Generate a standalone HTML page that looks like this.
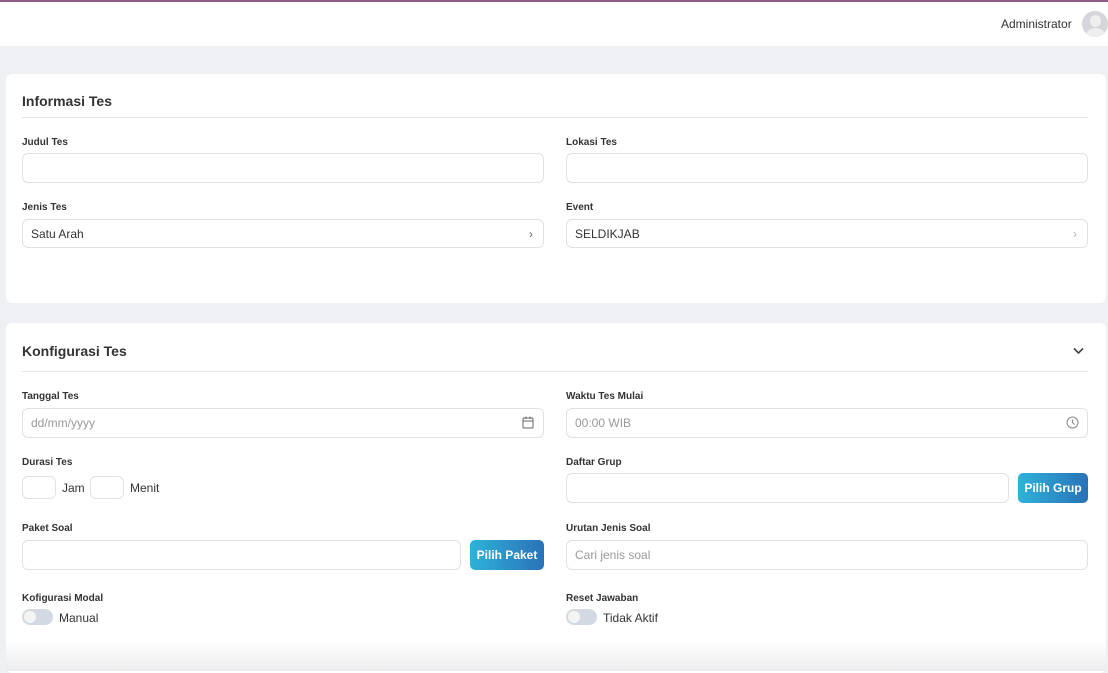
<!DOCTYPE html>
<html><head><style>
*{box-sizing:border-box;margin:0;padding:0}
body{width:1108px;height:671px;overflow:hidden;background:#eff0f3;font-family:"Liberation Sans",sans-serif;color:#333;position:relative}
.a{position:absolute}
.top{left:0;top:0;width:1108px;height:46px;background:#fff;border-top:2px solid #8a5c86}
.card{background:#fff;border-radius:6px;left:6px;width:1100px}
.t{font-size:14px;font-weight:bold;color:#333}
.hr{height:1px;background:#e4e5e8;left:22px;width:1066px}
.l{font-size:10px;font-weight:bold;color:#333}
.i{border:1px solid #dfe1e5;border-radius:6px;background:#fff;height:30px;font-size:12px;color:#333;padding-left:8px;line-height:28px}
.ph{color:#999}
.btn{background:linear-gradient(90deg,#2eb2d9,#2a72b8);color:#fff;font-size:12px;font-weight:bold;border-radius:5px;height:30px;line-height:30px;text-align:center}
.tg{width:31px;height:16px;border-radius:8px;background:#d3d9e2}
.tg:after{content:"";position:absolute;left:2px;top:2px;width:12px;height:12px;border-radius:50%;background:#f4f4f4}
.tx{font-size:12px;color:#333}
.ic{right:10px;top:7px;font-size:12px;color:#666}
</style></head><body>
<div class="a top"></div>
<div class="a tx" style="left:1001px;top:17px;font-size:12px">Administrator</div>
<div class="a" style="left:1082px;top:11px;width:26px;height:26px;border-radius:50%;background:#d4d6da;overflow:hidden"><div class="a" style="left:8px;top:4px;width:11px;height:12px;border-radius:50%;background:#eee"></div><div class="a" style="left:4px;top:17px;width:19px;height:14px;border-radius:50%;background:#eee"></div></div>

<div class="a card" style="top:74px;height:229px"></div>
<div class="a t" style="left:22px;top:93px">Informasi Tes</div>
<div class="a hr" style="top:117px"></div>
<div class="a l" style="left:22px;top:137px">Judul Tes</div>
<div class="a i" style="left:22px;top:153px;width:522px"></div>
<div class="a l" style="left:566px;top:137px">Lokasi Tes</div>
<div class="a i" style="left:566px;top:153px;width:522px"></div>
<div class="a l" style="left:22px;top:202px">Jenis Tes</div>
<div class="a i" style="left:22px;top:219px;width:522px;height:29px">Satu Arah<span class="a ic" style="top:0">&#8250;</span></div>
<div class="a l" style="left:566px;top:202px">Event</div>
<div class="a i" style="left:566px;top:219px;width:522px;height:29px">SELDIKJAB<span class="a ic" style="top:0;color:#aaa">&#8250;</span></div>

<div class="a card" style="top:323px;height:350px"></div>
<div class="a" style="left:6px;top:640px;width:1100px;height:31px;background:linear-gradient(#fff,#ececee)"></div>
<div class="a t" style="left:22px;top:343px">Konfigurasi Tes</div>
<svg class="a" style="left:1073px;top:347px" width="11" height="8"><path d="M1 1.5L5.5 6L10 1.5" stroke="#444" stroke-width="1.6" fill="none"/></svg>
<div class="a hr" style="top:371px"></div>
<div class="a l" style="left:22px;top:391px">Tanggal Tes</div>
<div class="a i ph" style="left:22px;top:408px;width:522px">dd/mm/yyyy
<svg class="a" style="right:9px;top:7px" width="12" height="13"><rect x="1" y="2" width="10" height="10" rx="1" stroke="#666" fill="none"/><path d="M1 5H11M4 0.5V3M8 0.5V3" stroke="#666"/></svg></div>
<div class="a l" style="left:566px;top:391px">Waktu Tes Mulai</div>
<div class="a i ph" style="left:566px;top:408px;width:522px">00:00 WIB
<svg class="a" style="right:8px;top:7px" width="13" height="13"><circle cx="6.5" cy="6.5" r="5.5" stroke="#888" fill="none"/><path d="M6.5 3.5V6.5L8.5 8.5" stroke="#888" fill="none"/></svg></div>
<div class="a l" style="left:22px;top:457px">Durasi Tes</div>
<div class="a i" style="left:22px;top:476px;width:34px;height:23px"></div>
<div class="a tx" style="left:62px;top:481px">Jam</div>
<div class="a i" style="left:90px;top:476px;width:34px;height:23px"></div>
<div class="a tx" style="left:130px;top:481px">Menit</div>
<div class="a l" style="left:566px;top:457px">Daftar Grup</div>
<div class="a i" style="left:566px;top:473px;width:443px"></div>
<div class="a btn" style="left:1018px;top:473px;width:70px">Pilih Grup</div>
<div class="a l" style="left:22px;top:523px">Paket Soal</div>
<div class="a i" style="left:22px;top:540px;width:439px"></div>
<div class="a btn" style="left:470px;top:540px;width:74px">Pilih Paket</div>
<div class="a l" style="left:566px;top:523px">Urutan Jenis Soal</div>
<div class="a i ph" style="left:566px;top:540px;width:522px">Cari jenis soal</div>
<div class="a l" style="left:22px;top:593px">Kofigurasi Modal</div>
<div class="a tg" style="left:22px;top:609px"></div>
<div class="a tx" style="left:59px;top:611px">Manual</div>
<div class="a l" style="left:566px;top:593px">Reset Jawaban</div>
<div class="a tg" style="left:566px;top:609px"></div>
<div class="a tx" style="left:603px;top:611px">Tidak Aktif</div>
</body></html>
